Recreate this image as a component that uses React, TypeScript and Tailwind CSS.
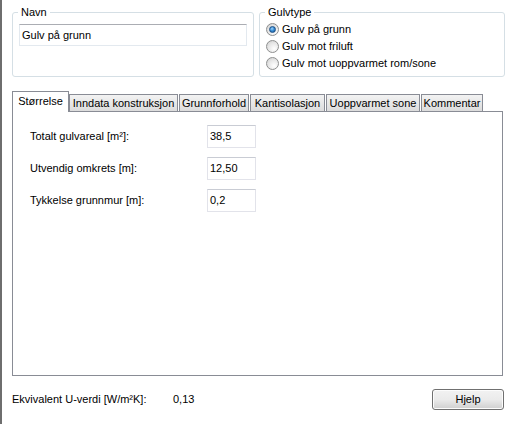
import React from 'react';

const tabs = [
  { label: 'Inndata konstruksjon', w: 'w-[109px]', first: true },
  { label: 'Grunnforhold', w: 'w-[70px]' },
  { label: 'Kantisolasjon', w: 'w-[75px]' },
  { label: 'Uoppvarmet sone', w: 'w-[94px]' },
  { label: 'Kommentar', w: 'w-[62px]' },
];

const fields = [
  { label: 'Totalt gulvareal [m²]:', value: '38,5' },
  { label: 'Utvendig omkrets [m]:', value: '12,50' },
  { label: 'Tykkelse grunnmur [m]:', value: '0,2' },
];

function Radio({ checked, label }: { checked?: boolean; label: string }) {
  return (
    <div className="flex items-center h-[17px]">
      <span className="w-[13px] h-[13px] rounded-full border border-[#8e8f8f] bg-[radial-gradient(circle_at_65%_70%,#ffffff_0%,#e6e6e6_55%,#c9c9c9_100%)] flex items-center justify-center shrink-0">
        {checked && (
          <span className="w-[7px] h-[7px] rounded-full border border-[#1b4f85] bg-[radial-gradient(circle_at_40%_35%,#9fd4ff_0%,#3a8fd6_45%,#10508f_100%)]" />
        )}
      </span>
      <span className="ml-[3px]">{label}</span>
    </div>
  );
}

export default function App() {
  return (
    <div className="w-[511px] h-[424px] bg-white border-l-2 border-[#6e6e6e] pl-[10px] font-['Liberation_Sans',Arial,sans-serif] text-[11px] leading-[13px] text-black overflow-hidden">
      {/* top group boxes */}
      <div className="flex gap-[5px] pt-[5px]">
        <fieldset className="w-[242px] h-[72px] border border-[#d5dfe5] rounded-[3px] px-[6px]">
          <legend className="px-[3px] -ml-px leading-[14px]">Navn</legend>
          <div className="mt-[5px] h-[22px] border border-[#e3e9ef] border-t-[#abadb3] flex items-center px-[2px]">
            Gulv på grunn
          </div>
        </fieldset>
        <fieldset className="w-[246px] h-[72px] border border-[#d5dfe5] rounded-[3px] px-[6px]">
          <legend className="px-[3px] -ml-px leading-[14px]">Gulvtype</legend>
          <div className="mt-[2px]">
            <Radio checked label="Gulv på grunn" />
            <Radio label="Gulv mot friluft" />
            <Radio label="Gulv mot uoppvarmet rom/sone" />
          </div>
        </fieldset>
      </div>

      {/* tabs */}
      <div className="mt-[14px] flex items-end h-[20px]">
        <div className="relative z-10 -mb-px w-[57px] h-[21px] bg-white border border-b-0 border-[#898c95] flex justify-center pt-[3px]">
          Størrelse
        </div>
        {tabs.map((t) => (
          <div
            key={t.label}
            className={`${t.w} ${t.first ? '' : 'ml-px'} h-[17px] bg-gradient-to-b from-[#f3f3f3] to-[#dcdcdc] border border-b-0 border-[#898c95] flex items-center justify-center`}
          >
            {t.label}
          </div>
        ))}
      </div>
      <div className="w-[491px] h-[265px] border border-[#898c95] bg-white pl-[17px] pt-[13px] flex flex-col gap-[9px]">
        {fields.map((f) => (
          <div key={f.label} className="flex items-center">
            <div className="w-[177px]">{f.label}</div>
            <div className="w-[49px] h-[23px] border border-[#e2e3ea] border-t-[#c9ccd4] flex items-center pl-[2px]">
              {f.value}
            </div>
          </div>
        ))}
      </div>

      {/* bottom */}
      <div className="mt-[13px] w-[492px] h-[21px] flex items-center">
        <span className="w-[161px]">Ekvivalent U-verdi [W/m²K]:</span>
        <span>0,13</span>
        <button className="ml-auto w-[72px] h-[21px] rounded-[3px] border border-[#707070] bg-gradient-to-b from-[#f2f2f2] via-[#ebebeb] to-[#cfcfcf] shadow-[inset_0_0_0_1px_#fcfcfc] text-[11px] leading-[13px]">
          Hjelp
        </button>
      </div>
    </div>
  );
}
